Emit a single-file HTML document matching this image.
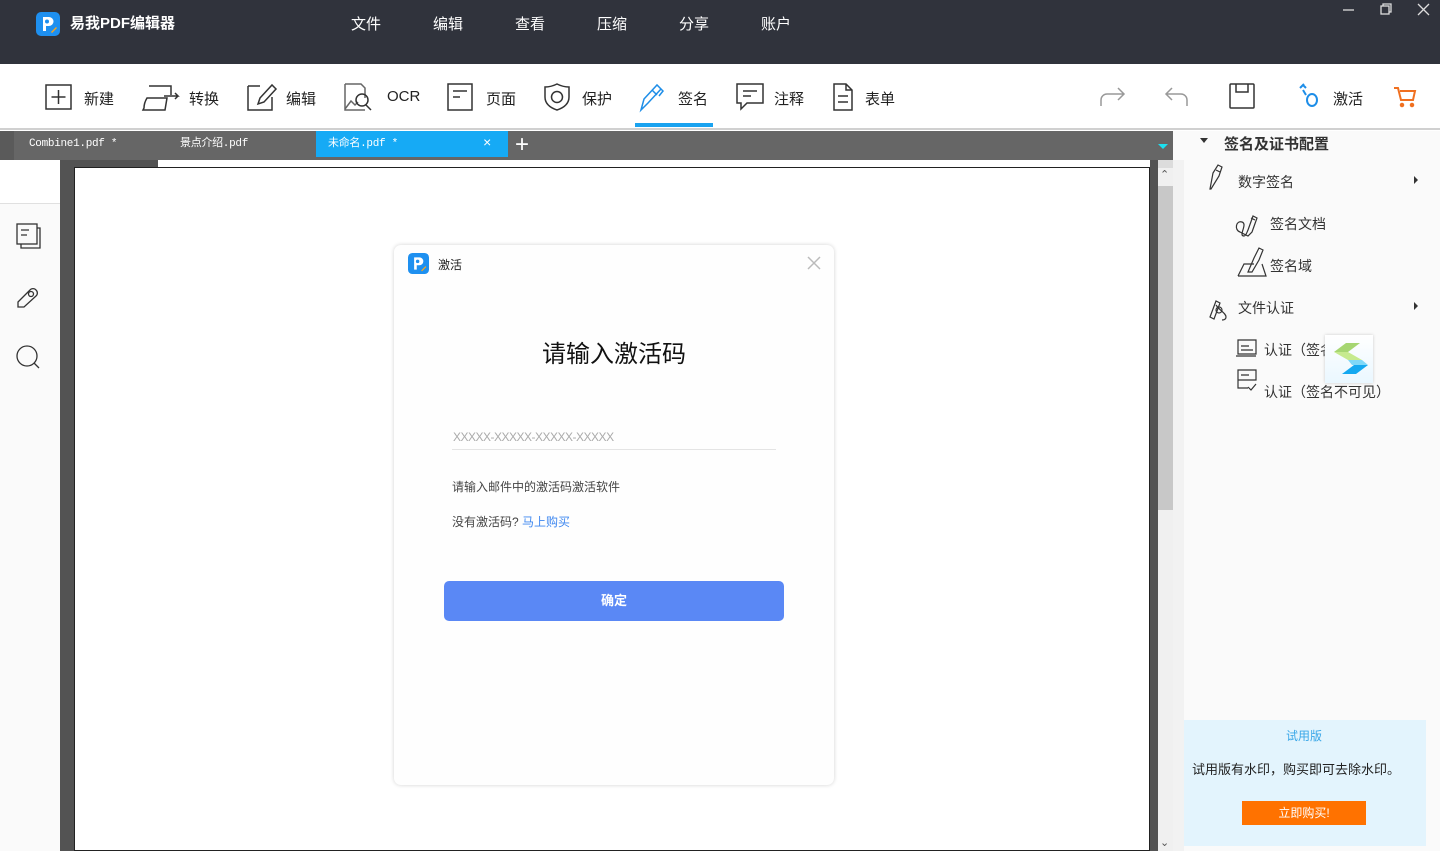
<!DOCTYPE html>
<html><head><meta charset="utf-8"><style>
*{margin:0;padding:0;box-sizing:border-box}
body{width:1440px;height:851px;overflow:hidden;position:relative;background:#fff;font-family:"Liberation Sans","Noto Sans CJK SC",sans-serif;color:#222}
.abs{position:absolute}
.title{left:0;top:0;width:1440px;height:64px;background:#30333c}
.menu{top:13px;color:#fff;font-size:15px}
.tool{top:64px;left:0;width:1440px;height:66px;background:#fff;border-bottom:2px solid #d0d0d0}
.tl{position:absolute;top:88px;font-size:15px;color:#222}
.tabs{left:0;top:131px;width:1173px;height:29px;background:#666}
.tab{position:absolute;top:131px;height:26px;font-family:"Liberation Mono","Noto Sans CJK SC",monospace;font-size:11px;color:#fff;line-height:26px;letter-spacing:-.3px}
.rp{left:1173px;top:131px;width:267px;height:720px;background:#fafafa}
.ri{position:absolute;font-size:14px;color:#333}
</style></head><body>
<div class="abs title"></div>
<svg class="abs" style="left:36px;top:12px" width="24" height="24" viewBox="0 0 24 24"><rect width="24" height="24" rx="5" fill="#1e90f0"/><path d="M7 5h6a4.5 4.5 0 010 9h-3v5H7z" fill="#fff"/><circle cx="11" cy="9.5" r="2" fill="#1e90f0"/><path d="M15 20l5-5 1 1-5 5z" fill="#f5a623"/></svg>
<div class="abs" style="left:70px;top:12px;color:#fff;font-size:15px;font-weight:bold">易我PDF编辑器</div>
<div class="abs menu" style="left:351px">文件</div>
<div class="abs menu" style="left:433px">编辑</div>
<div class="abs menu" style="left:515px">查看</div>
<div class="abs menu" style="left:597px">压缩</div>
<div class="abs menu" style="left:679px">分享</div>
<div class="abs menu" style="left:761px">账户</div>
<svg class="abs" style="left:1340px;top:2px" width="100" height="16" stroke="#ddd" fill="none" stroke-width="1.3"><path d="M3 8h11"/><rect x="41" y="4" width="8" height="8"/><path d="M43 4V2h8v8h-2"/><path d="M78 2l11 11M89 2L78 13"/></svg>

<div class="abs tool"></div>
<svg class="abs" style="left:0;top:78px" width="1440" height="40" fill="none" stroke="#333" stroke-width="1.5">
<rect x="46" y="7" width="25" height="24"/><path d="M58.5 12v14M51.5 19h14"/>
<path d="M149 8h22v9M144 30c0-5 3-10 3-10h20l-2 12H143zM164 18h14l-3-3M178 18l-3 3"/>
<path d="M248 8h12M248 8v24h24V19M258 26l2-6 12-13 4 4-12 13z"/>
<path d="M345 6h16l4 4v10M345 6v26h20" stroke="#666"/><path d="M345 31l6-8 4 4 3-3" stroke="#666"/><circle cx="362" cy="22" r="6"/><path d="M366 27l5 5"/>
<rect x="448" y="6" width="24" height="26"/><path d="M453 13h14M453 19h7"/>
<path d="M557 6c4 2 8 3 12 3v10c0 7-6 11-12 13-6-2-12-6-12-13V9c4 0 8-1 12-3z"/><circle cx="557" cy="19" r="5.5"/>
<path d="M641 32l3-11 13-14 4 4-13 14zM652 12l5 5M661 11l2 2-4 5" stroke="#1e8ee8"/>
<path d="M737 6h26v19h-16l-6 6v-6h-4zM743 13h14M743 18h8"/>
<path d="M834 6h12l6 6v20h-18zM846 6v6h6M838 18h10M838 24h10"/>
<path d="M1101 28v-6a6 6 0 016-6h17M1118 10l6 6-6 6" stroke="#999"/>
<path d="M1187 28v-6a6 6 0 00-6-6h-15M1172 10l-6 6 6 6" stroke="#999"/>
<rect x="1230" y="6" width="24" height="24" rx="1"/><path d="M1236 6v8h12V6"/>
<path d="M1300 10l4-4M1303 7l3 3M1303 12l3 5" stroke="#1e8ee8" stroke-width="2"/><ellipse cx="1312" cy="22" rx="5" ry="6" stroke="#1e8ee8" stroke-width="2"/>
<path d="M1394 10h4l3 12h12l2-9h-15" stroke="#f07020" stroke-width="2"/><circle cx="1402" cy="27" r="1.5" fill="#f07020" stroke="#f07020"/><circle cx="1412" cy="27" r="1.5" fill="#f07020" stroke="#f07020"/>
</svg>
<div class="tl" style="left:84px">新建</div>
<div class="tl" style="left:189px">转换</div>
<div class="tl" style="left:286px">编辑</div>
<div class="tl" style="left:387px">OCR</div>
<div class="tl" style="left:486px">页面</div>
<div class="tl" style="left:582px">保护</div>
<div class="tl" style="left:678px">签名</div>
<div class="tl" style="left:774px">注释</div>
<div class="tl" style="left:865px">表单</div>
<div class="tl" style="left:1333px">激活</div>
<div class="abs" style="left:635px;top:123px;width:78px;height:4px;background:#1aa3f0"></div>

<div class="abs tabs"></div>
<div class="abs" style="left:0;top:131px;width:14px;height:29px;background:#5a5a5a"></div>
<div class="tab" style="left:29px">Combine1.pdf *</div>
<div class="tab" style="left:180px">景点介绍.pdf</div>
<div class="tab" style="left:316px;width:192px;height:26px;background:#16aaf5;padding-left:12px">未命名.pdf *<span style="position:absolute;left:167px;font-size:14px">×</span></div>
<div class="abs" style="left:515px;top:132px;color:#fff;font-size:24px;line-height:26px">+</div>
<div class="abs" style="left:1158px;top:144px;width:0;height:0;border-left:5px solid transparent;border-right:5px solid transparent;border-top:5px solid #1be0f0"></div>

<div class="abs" style="left:0;top:160px;width:60px;height:691px;background:#fafafa"></div>
<div class="abs" style="left:0;top:160px;width:60px;height:44px;background:#fff;border-bottom:1px solid #e0e0e0"></div>
<svg class="abs" style="left:14px;top:220px" width="30" height="160" fill="none" stroke="#333" stroke-width="1.3"><rect x="3" y="4" width="20" height="20"/><path d="M7 10h8M7 15h6M23 8h3v20H7v-4"/>
<path d="M4 85l12-12a4 4 0 016 0l0 0a4 4 0 010 6L10 90H4z" transform="translate(0,-3)"/><circle cx="17" cy="74" r="2.5"/>
<circle cx="13" cy="136" r="10"/><path d="M20 143l5 5"/></svg>
<div class="abs" style="left:60px;top:160px;width:98px;height:691px;background:#535353"></div>
<div class="abs" style="left:74px;top:167px;width:1076px;height:684px;background:#fff;border:1px solid #222"></div>
<div class="abs" style="left:1150px;top:160px;width:8px;height:691px;background:#535353"></div>
<div class="abs" style="left:1158px;top:160px;width:15px;height:691px;background:#f0f0f0"></div>
<div class="abs" style="left:1158px;top:160px;width:15px;height:8px;background:#dcdcdc"></div>
<div class="abs" style="left:1158px;top:186px;width:15px;height:324px;background:#c8c8c8"></div>
<div class="abs" style="left:1160px;top:168px;color:#555;font-size:11px">&#8963;</div>
<div class="abs" style="left:1160px;top:836px;color:#555;font-size:11px">&#8964;</div>

<div class="abs rp"></div>
<div class="abs" style="left:1173px;top:160px;width:11px;height:691px;background:#f2f2f2"></div>
<div class="abs" style="left:1200px;top:138px;width:0;height:0;border-left:4px solid transparent;border-right:4px solid transparent;border-top:5px solid #333"></div>
<div class="ri" style="left:1224px;top:133px;font-size:15px;font-weight:bold">签名及证书配置</div>
<svg class="abs" style="left:1200px;top:160px" width="240" height="240" fill="none" stroke="#333" stroke-width="1.2">
<path d="M10 29l3-16 5-8 4 2-3 9-8 13zM16 10l4 2"/>
<path d="M40 72c-6-2-4-12 2-10s-4 14 2 14c2 0 3-4 4-6l5-14 4 2-5 14-4 4zM51 58l4 2"/>
<path d="M38 116l6-12h10M62 104l4 12H38M48 112l6-14 5-10 4 2-4 10-7 12z"/>
<path d="M10 157l6-16 4 2-6 16zM16 145c4 6 10 8 10 12 0 3-3 3-4 3"/><circle cx="19" cy="150" r="3"/>
<path d="M38 180h18v14H38zM41 186h8M41 190h12M36 196h20"/>
<path d="M38 220h18v-10H38v18h10M41 215h8M41 220h8M48 227l3 3 5-6"/>
</svg>
<div class="ri" style="left:1238px;top:172px">数字签名</div>
<div class="ri" style="left:1270px;top:214px">签名文档</div>
<div class="ri" style="left:1270px;top:256px">签名域</div>
<div class="ri" style="left:1238px;top:298px">文件认证</div>
<div class="ri" style="left:1264px;top:340px">认证（签名</div>
<div class="ri" style="left:1264px;top:382px">认证（签名不可见）</div>
<div class="abs" style="left:1414px;top:176px;border-top:4px solid transparent;border-bottom:4px solid transparent;border-left:4px solid #333"></div>
<div class="abs" style="left:1414px;top:302px;border-top:4px solid transparent;border-bottom:4px solid transparent;border-left:4px solid #333"></div>
<div class="abs" style="left:1325px;top:335px;width:48px;height:48px;background:linear-gradient(#fff,#eaf7ff);box-shadow:0 0 3px #ccc"></div>
<svg class="abs" style="left:1330px;top:342px" width="40" height="36"><path d="M4 10l12-9h14l-12 9z" fill="#a6d672"/><path d="M4 10l14 8h14L18 10z" fill="#c6ea8e"/><path d="M18 18l14 0 6 5H22z" fill="#7fd8f8"/><path d="M38 23l-12 9H12l12-9z" fill="#14a8f0"/></svg>
<div class="abs" style="left:1184px;top:720px;width:242px;height:126px;background:#e3f4fd"></div>
<div class="abs" style="left:1286px;top:727px;font-size:12px;color:#3aa7e8">试用版</div>
<div class="abs" style="left:1192px;top:759px;font-size:13px;color:#222">试用版有水印，购买即可去除水印。</div>
<div class="abs" style="left:1242px;top:801px;width:124px;height:24px;background:#ff7200;color:#fff;font-size:12px;text-align:center;line-height:24px">立即购买!</div>

<div class="abs" style="left:394px;top:245px;width:440px;height:540px;background:#fefefe;border-radius:7px;box-shadow:0 0 4px rgba(0,0,0,.18)"></div>
<svg class="abs" style="left:408px;top:253px" width="21" height="21" viewBox="0 0 24 24"><rect width="24" height="24" rx="5" fill="#1e90f0"/><path d="M7 5h6a4.5 4.5 0 010 9h-3v5H7z" fill="#fff"/><circle cx="11" cy="9.5" r="2" fill="#1e90f0"/><path d="M15 20l5-5 1 1-5 5z" fill="#f5a623"/></svg>
<div class="abs" style="left:438px;top:256px;font-size:12px;color:#222">激活</div>
<svg class="abs" style="left:807px;top:256px" width="14" height="14" stroke="#bbb" stroke-width="1.5"><path d="M1 1l12 12M13 1L1 13"/></svg>
<div class="abs" style="left:394px;top:334px;width:440px;text-align:center;font-size:24px;color:#111">请输入激活码</div>
<div class="abs" style="left:453px;top:430px;font-size:12px;color:#aaa;letter-spacing:-.5px">XXXXX-XXXXX-XXXXX-XXXXX</div>
<div class="abs" style="left:452px;top:449px;width:324px;height:1px;background:#e4e4e4"></div>
<div class="abs" style="left:452px;top:478px;font-size:12px;color:#444">请输入邮件中的激活码激活软件</div>
<div class="abs" style="left:452px;top:513px;font-size:12px;color:#444">没有激活码? <span style="color:#3f88f0">马上购买</span></div>
<div class="abs" style="left:444px;top:581px;width:340px;height:40px;background:#5a88f5;border-radius:5px;color:#fff;font-size:13px;font-weight:bold;text-align:center;line-height:40px">确定</div>
</body></html>
